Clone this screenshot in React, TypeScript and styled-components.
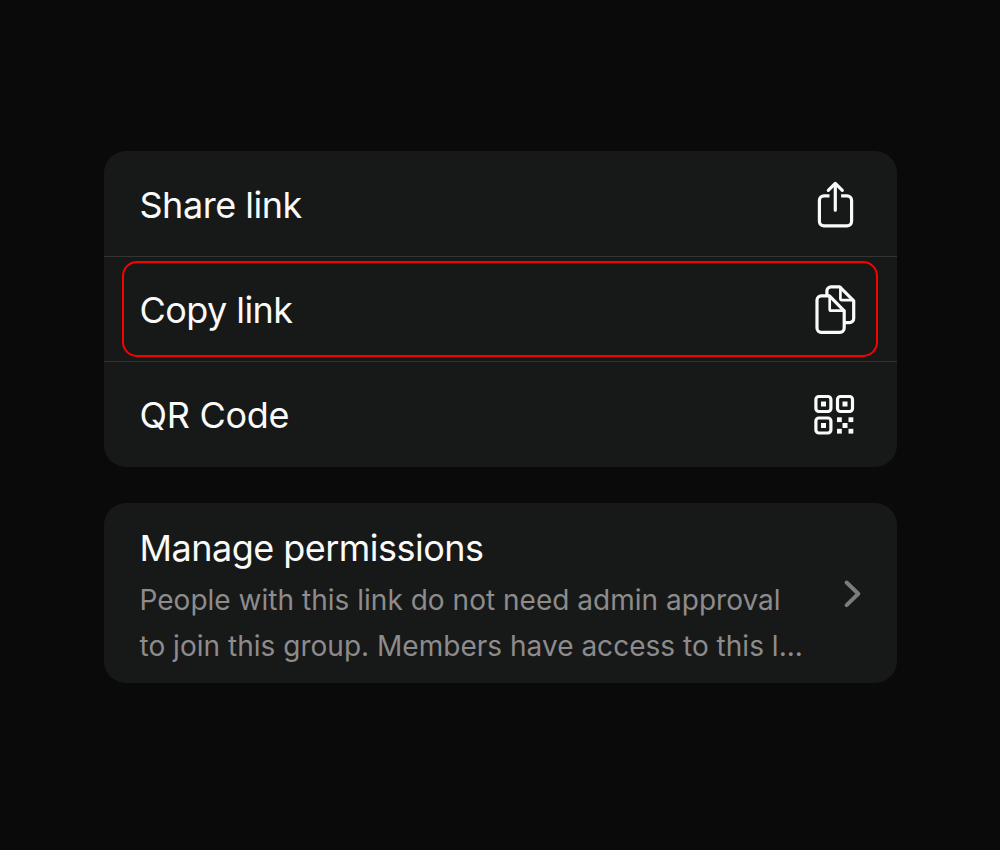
import React from "react";
import styled, { createGlobalStyle } from "styled-components";

const GlobalStyle = createGlobalStyle`
  * { box-sizing: border-box; }
  body {
    margin: 0;
    background: #0a0a0a;
    font-family: Inter, "Liberation Sans", sans-serif;
  }
`;

const Screen = styled.main`
  display: flex;
  flex-direction: column;
  gap: 36px;
  height: 850px;
  padding: 151px 103px 0 104px;
  overflow: hidden;
`;

const Card = styled.section`
  border-radius: 22px;
  background: #171918;
`;

const ActionRow = styled.div<{ $last?: boolean }>`
  position: relative;
  display: flex;
  align-items: center;
  justify-content: space-between;
  height: 105px;
  padding: ${({ $last }) => ($last ? "1px" : "2px")} 39px 0 35.5px;
  border-bottom: ${({ $last }) => ($last ? "none" : "1px solid #333534")};

  &:first-child {
    height: 106px;
  }
`;

const Highlight = styled.div`
  position: absolute;
  inset: 4px 19px 4px 18px;
  border: 2px solid #fa0000;
  border-radius: 15px;
`;

const Label = styled.span<{ $tracking: number }>`
  color: #fafafa;
  font-size: 36px;
  line-height: 46px;
  letter-spacing: ${({ $tracking }) => $tracking}px;
  white-space: nowrap;
`;

const Icon = styled.svg`
  display: block;
  flex: none;
  fill: none;
  stroke: #fafafa;
  stroke-width: 3.2;
  stroke-linecap: round;
  stroke-linejoin: round;
`;

const PermissionRow = styled.div`
  display: flex;
  align-items: center;
  justify-content: space-between;
  height: 180px;
  padding: 2px 33px 0 35.5px;
`;

const PermissionText = styled.div`
  display: flex;
  flex-direction: column;
  gap: 6px;
  padding-top: 5px;
`;

const Description = styled.p`
  margin: 0;
  color: #8e8b8c;
  font-size: 28px;
  line-height: 46px;
  letter-spacing: 0.02px;
  white-space: nowrap;
`;

const Line = styled.span`
  display: block;
`;

const ShareIcon = () => (
  <Icon width="44" height="52" viewBox="814 179 44 52">
    <path d="M829.5 195.8H824a4.6 4.6 0 0 0-4.6 4.6v20.9a4.6 4.6 0 0 0 4.6 4.6h23a4.6 4.6 0 0 0 4.6-4.6v-20.9a4.6 4.6 0 0 0-4.6-4.6h-5.9" strokeLinecap="butt" />
    <path d="M835.3 210.2V183.4M828.3 190.4l7-7 7 7" />
  </Icon>
);

const CopyIcon = () => (
  <Icon width="44" height="52" viewBox="814 284 44 52">
    <path d="M821.2 295.9h8.2L844.2 310.8v17.3a4.2 4.2 0 0 1-4.2 4.2H821.2a4.2 4.2 0 0 1-4.2-4.2V300.1a4.2 4.2 0 0 1 4.2-4.2z" />
    <path d="M829.7 296.4v12.8a1.5 1.5 0 0 0 1.5 1.5h12.8" strokeWidth="2.7" />
    <path d="M826.9 294.4v-3.4a4.2 4.2 0 0 1 4.2-4.2h8.6L853.7 300.8v17.7a4.2 4.2 0 0 1-4.2 4.2H846" />
    <path d="M840.4 287.4v11.2a1.5 1.5 0 0 0 1.5 1.5H853" strokeWidth="2.7" />
  </Icon>
);

const QrIcon = () => (
  <Icon width="44" height="44" viewBox="814 393 44 44" overflow="visible">
    <rect x="815.9" y="396.5" width="15" height="15" rx="3" />
    <rect x="837.5" y="396.5" width="15" height="15" rx="3" />
    <rect x="815.9" y="418" width="15" height="15" rx="3" />
    <g fill="#fafafa" stroke="none">
      <rect x="821" y="401.5" width="5" height="5" />
      <rect x="842.5" y="401.5" width="5" height="5" />
      <rect x="821" y="423" width="5" height="5" />
      <rect x="837" y="417.3" width="4.8" height="4.8" />
      <rect x="848.5" y="417.3" width="4.8" height="4.8" />
      <rect x="842.5" y="423" width="5" height="5" />
      <rect x="837" y="428.8" width="4.8" height="4.8" />
      <rect x="848.5" y="428.8" width="4.8" height="4.8" />
    </g>
  </Icon>
);

const Chevron = styled(Icon)`
  stroke: #7b7c7e;
  stroke-width: 4;
`;

export default function App() {
  return (
    <>
      <GlobalStyle />
      <Screen>
        <Card>
          <ActionRow>
            <Label $tracking={-0.48}>Share link</Label>
            <ShareIcon />
          </ActionRow>
          <ActionRow>
            <Highlight />
            <Label $tracking={-0.57}>Copy link</Label>
            <CopyIcon />
          </ActionRow>
          <ActionRow $last>
            <Label $tracking={-0.3}>QR Code</Label>
            <QrIcon />
          </ActionRow>
        </Card>
        <Card>
          <PermissionRow>
            <PermissionText>
              <Label $tracking={-0.52}>Manage permissions</Label>
              <Description>
                <Line>People with this link do not need admin approval</Line>
                <Line>to join this group. Members have access to this l...</Line>
              </Description>
            </PermissionText>
            <Chevron width="22" height="32" viewBox="842.4 578 22 32">
              <path d="M847 582.5l11.7 11.3L847 605.1" />
            </Chevron>
          </PermissionRow>
        </Card>
      </Screen>
    </>
  );
}
